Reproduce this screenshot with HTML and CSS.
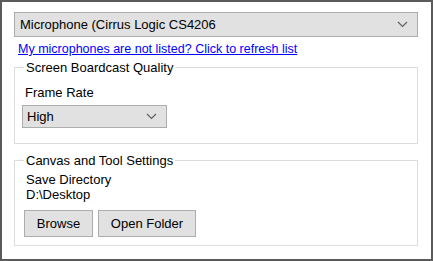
FILE: index.html
```html
<!DOCTYPE html>
<html lang="en">
<head>
    <meta charset="UTF-8">
    <title>Settings</title>
    <link rel="stylesheet" href="styles.css">
</head>
<body>
    <div id="window">
        <div class="combo wide">
            <span>Microphone (Cirrus Logic CS4206</span>
            <svg class="chev" width="11" height="7" viewBox="0 0 11 7"><path d="M1 1 L5.5 5.5 L10 1" fill="none" stroke="#606060" stroke-width="1.2"/></svg>
        </div>
        <a class="refresh" href="#">My microphones are not listed? Click to refresh list</a>
        <fieldset class="group quality">
            <legend>Screen Boardcast Quality</legend>
            <div class="label">Frame Rate</div>
            <div class="combo small">
                <span>High</span>
                <svg class="chev" width="11" height="7" viewBox="0 0 11 7"><path d="M1 1 L5.5 5.5 L10 1" fill="none" stroke="#606060" stroke-width="1.2"/></svg>
            </div>
        </fieldset>
        <fieldset class="group canvas">
            <legend>Canvas and Tool Settings</legend>
            <div class="label">Save Directory</div>
            <div class="label">D:\Desktop</div>
            <div class="buttons">
                <button class="browse">Browse</button>
                <button class="open">Open Folder</button>
            </div>
        </fieldset>
    </div>
</body>
</html>
```

FILE: styles.css
```css
html, body{
    margin: 0;
    padding: 0;
    background: #fff;
}
#window{
    width: 433px;
    height: 261px;
    box-sizing: border-box;
    border: 2px solid #5b5b5b;
    padding: 10px 12px 0 12px;
    font-family: "Liberation Sans", Arial, sans-serif;
    font-size: 12.5px;
    color: #000;
}
.combo{
    box-sizing: border-box;
    background: #e1e1e1;
    border: 1px solid #adadad;
    display: flex;
    align-items: center;
    justify-content: space-between;
    padding: 0 9px 0 5px;
}
.combo.wide{
    width: 404px;
    height: 25px;
    font-size: 13px;
}
.combo.small{
    width: 145px;
    height: 23px;
    margin-top: 5px;
    padding-left: 4px;
    font-size: 13px;
}
.refresh{
    display: block;
    color: #0000ff;
    line-height: 15px;
    margin: 5px 0 0 4px;
    width: max-content;
}
.group{
    border: 1px solid #dcdcdc;
    margin: 0;
    box-sizing: border-box;
    width: 404px;
}
.group legend{
    padding: 0 2px;
    line-height: 15px;
    font-size: 13px;
}
.quality{
    margin-top: 3px;
    height: 84px;
    padding: 10px 7px 0 7px;
}
.quality legend{
    margin-left: 2px;
}
.quality .label{
    margin-left: 3px;
    line-height: 15px;
    font-size: 13px;
}
.canvas{
    margin-top: 9px;
    height: 93px;
    padding: 4px 9px 0 9px;
}
.canvas .label{
    margin-left: 2px;
    line-height: 15px;
    font-size: 13px;
}
.buttons{
    display: flex;
    gap: 5px;
    margin-top: 8px;
}
.buttons button{
    font-family: inherit;
    font-size: 13px;
    background: #e1e1e1;
    border: 1px solid #adadad;
    height: 27px;
    padding: 0;
    color: #000;
}
.browse{
    width: 69px;
}
.open{
    width: 98px;
}
```
